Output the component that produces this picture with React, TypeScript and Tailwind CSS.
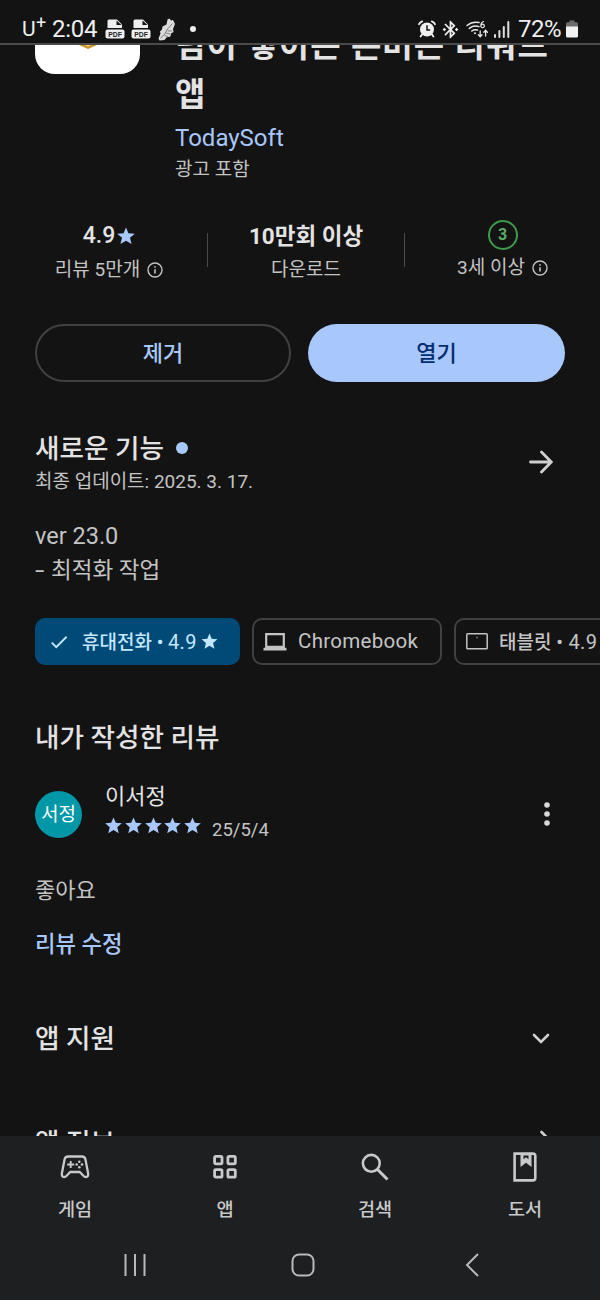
import React from "react";
import { MdBluetoothConnected, MdCheck, MdStar } from "react-icons/md";

const navItems = [
  { name: "게임", icon: <GameIcon /> },
  { name: "앱", icon: <AppsIcon /> },
  { name: "검색", icon: <SearchIcon /> },
  { name: "도서", icon: <BookIcon /> },
];

function Star({ className }: { className: string }) {
  return (
    <svg viewBox="0 0 20 20" className={className} fill="currentColor">
      <path d="M10 .5l2.700 6.400 7.100.5-5.400 4.600 1.800 7L10 15.200l-6.200 3.800 1.800-7L.200 7.400l7.100-.5z" />
    </svg>
  );
}

function InfoIcon() {
  return (
    <svg width="16" height="16" viewBox="0 0 16 16" fill="none" stroke="#c4c4c4" strokeWidth="1.4" className="-mt-px">
      <circle cx="8" cy="8" r="7" />
      <path d="M8 7.2v4.3M8 4.2v1.5" strokeWidth="1.6" />
    </svg>
  );
}

function PdfIcon() {
  return (
    <svg width="20" height="20" viewBox="0 0 20 20">
      <path d="M2.500 9V2q0-1.500 1.500-1.500H12L17 5.500V9z" fill="#eee" />
      <path d="M11.500 1.500v4.500H16.500z" fill="#131313" />
      <rect x="0.5" y="10.5" width="19" height="9" rx="2" fill="#eee" />
      <text x="10" y="17.500" textAnchor="middle" fontSize="6.800" fontWeight="bold" fontFamily="Liberation Sans" fill="#222">PDF</text>
    </svg>
  );
}

function ShoeIcon() {
  return (
    <svg width="18" height="23" viewBox="0 0 18 23">
      <path d="M9.500 1.500l2-1 1.500 2 2-.5 2 4-2 5 .5 3-2.500 1.500-.5 3-4 1-2 2.500-5 .5-1-2 2-5-.5-2 2-2 .5-3 4-2z" fill="#dcdcdc" />
      <path d="M14.500 5.500l-5 5.500-3 5.500-4 3.500M9.800 12.800l4.200.2M8.300 15.200l4 .8M6.700 17.700l3.300.8" fill="none" stroke="#555" strokeWidth="0.700" />
    </svg>
  );
}

function AlarmIcon() {
  return (
    <svg width="18" height="18" viewBox="0 0 18 18">
      <circle cx="9" cy="9.5" r="7" fill="#f0f0f0" />
      <path d="M1 4.2Q2 2 4.2 1.3M17 4.2Q16 2 13.8 1.3M4 14.5L2.6 16.6M14 14.5l1.4 2.1" stroke="#f0f0f0" strokeWidth="1.8" strokeLinecap="round" fill="none" />
      <path d="M9 5.3v4.6h3.2" stroke="#131313" strokeWidth="1.5" fill="none" />
    </svg>
  );
}

function WifiIcon() {
  return (
    <svg width="23" height="18" viewBox="0 0 23 18" fill="none" stroke="#e8e8e8" strokeWidth="1.5" strokeLinecap="round">
      <path d="M1 5.5Q6.5 1 13 2.6M3.3 8.4Q7.5 5 13 6.6M5.8 11Q8.5 9 11.5 10" />
      <circle cx="9" cy="13.2" r="1" fill="#e8e8e8" stroke="none" />
      <path d="M17.5 1.5Q14.8 2.5 14.8 5.8M16.6 4.2a1.7 1.7 0 1 1 0 3.5a1.7 1.7 0 1 1 0-3.5" strokeWidth="1.2" />
      <path d="M14.2 11v5.5M12.4 14.8l1.8 1.9 1.8-1.9M19.6 16v-5.5M17.8 12.2l1.8-1.9 1.8 1.9" strokeWidth="1.3" />
    </svg>
  );
}

function SignalIcon() {
  return (
    <svg width="16" height="17" viewBox="0 0 16 17" fill="#dedede">
      <rect x="0" y="13" width="2" height="4" rx="1" />
      <rect x="4.4" y="9" width="2" height="8" rx="1" />
      <rect x="8.8" y="5" width="2" height="12" rx="1" />
      <rect x="13.3" y="0" width="2" height="17" rx="1" />
    </svg>
  );
}

function BatteryIcon() {
  return (
    <svg width="12" height="18" viewBox="0 0 12 18">
      <path d="M3.5 0.5h5v1.8h2q1.5 0 1.5 1.5V7H0V3.800Q0 2.300 1.500 2.300h2z" fill="#6c6c6c" />
      <path d="M0 6.500h12v9.500q0 1.500-1.500 1.500h-9Q0 17.500 0 16z" fill="#f2f2f2" />
    </svg>
  );
}

function GameIcon() {
  return (
    <svg width="30" height="24" viewBox="0 0 30 24" fill="none" stroke="#c8c9ca" strokeWidth="2.300" strokeLinejoin="round">
      <path d="M8 1.500h14q2.800 0 3.400 2.800l2.700 14q.6 3.700-2.300 3.700-1.200 0-2.200-1l-3.800-4h-9.600l-3.800 4q-1 1-2.200 1-2.900 0-2.300-3.700l2.700-14q.6-2.800 3.400-2.800z" />
      <path d="M10.700 6v7M7.200 9.500h7" strokeWidth="1.900" />
      <g fill="#c8c9ca" stroke="none">
        <circle cx="19.300" cy="6.800" r="1.300" />
        <circle cx="19.300" cy="12.200" r="1.300" />
        <circle cx="16.700" cy="9.500" r="1.300" />
        <circle cx="22" cy="9.500" r="1.300" />
      </g>
    </svg>
  );
}

function AppsIcon() {
  return (
    <svg width="24" height="24" viewBox="0 0 24 24" fill="none" stroke="#c8c9ca" strokeWidth="2.800">
      <rect x="1.600" y="1.400" width="7.400" height="7.400" rx="1.200" />
      <rect x="14.900" y="1.400" width="7.400" height="7.400" rx="1.200" />
      <rect x="1.600" y="14.700" width="7.400" height="7.400" rx="1.200" />
      <rect x="14.900" y="14.700" width="7.400" height="7.400" rx="1.200" />
    </svg>
  );
}

function SearchIcon() {
  return (
    <svg width="28" height="28" viewBox="0 0 28 28" fill="none" stroke="#c8c9ca" strokeWidth="2.600">
      <circle cx="10.300" cy="10.300" r="8.400" />
      <path d="M16.300 16.300L26.500 26.500" strokeWidth="3" />
    </svg>
  );
}

function BookIcon() {
  return (
    <svg width="24" height="30" viewBox="0 0 24 30" fill="none" stroke="#c8c9ca" strokeWidth="2.600">
      <path d="M1.600 1.600h18.300q2.400 0 2.400 2.400v22q0 2.400-2.400 2.400H1.600z" />
      <path d="M7.500 1.500h11V15l-5.500-4.300L7.500 15z M10.500 3.500v3.700l2.500-2 2.500 2V3.500z" fill="#c8c9ca" fillRule="evenodd" stroke="none" />
    </svg>
  );
}

const App = () => {
  return (
    <div className="w-[600px] h-[1300px] flex flex-col overflow-hidden bg-[#131313] text-[#e3e3e3] font-[Roboto,'Noto_Sans_CJK_KR',sans-serif] whitespace-nowrap">
      {/* Status bar */}
      <header className="h-[45px] shrink-0 border-b-2 border-[#4a4a4a] flex items-center pt-[15px] text-[#efefef]">
        <div className="flex items-center w-[418px] pl-[22px]">
          <span className="text-[21px] leading-6 w-[13px]">U</span>
          <span className="text-[18px] leading-6 w-[17px] -mt-3 pl-px">+</span>
          <span className="text-[24px] leading-6 w-[53px] tracking-[-0.3px]">2:04</span>
          <PdfIcon />
          <span className="w-[6px]"></span>
          <PdfIcon />
          <span className="w-[7px]"></span>
          <ShoeIcon />
          <span className="ml-[14px] w-[6px] h-[6px] rounded-full bg-[#eee]"></span>
        </div>
        <AlarmIcon />
        <MdBluetoothConnected className="w-[21px] h-[21px] ml-[4px] mr-[5px]" />
        <WifiIcon />
        <span className="ml-[5px] mr-2"><SignalIcon /></span>
        <span className="text-[24px] leading-6 w-[48px] tracking-[-0.500px]">72%</span>
        <BatteryIcon />
      </header>

      <main className="h-[1091px] shrink-0 overflow-hidden">
        {/* App header */}
        <section className="flex h-[137px] pl-[35px]">
          <div className="w-[105px] h-[29px] bg-white rounded-b-[20px] flex justify-center">
            <svg width="20" height="4" viewBox="0 0 20 4">
              <path d="M1 0h18l-9 4z" fill="#c99526" />
              <path d="M7 0h6l-3 2z" fill="#f2cc6c" />
            </svg>
          </div>
          <div className="ml-[35px] -mt-[24px]">
            <h1 className="text-[33px] leading-[49px] tracking-[1.100px] font-bold">
              덤이 쌓이는 돈버는 리워드
              <br />앱
            </h1>
            <p className="text-[24px] leading-8 mt-[3px] text-[#a8c7fa]">TodaySoft</p>
            <p className="text-[19px] leading-7 mt-[2px] text-[#c4c4c4]">광고 포함</p>
          </div>
        </section>

        {/* Stats */}
        <section className="flex items-start h-[142px] pt-[38px]">
          <div className="w-[207px] pl-[11px] flex flex-col items-center gap-[2px]">
            <div className="flex items-center h-8 text-[23px] font-medium">
              4.9<Star className="w-[18px] h-[18px] ml-[2px] text-[#a8c7fa]" />
            </div>
            <div className="flex items-center gap-[7px] h-8 text-[19px] text-[#c4c4c4]">
              리뷰 5만개 <InfoIcon />
            </div>
          </div>
          <div className="w-px h-[34px] mt-[13px] bg-[#4b4b4b]"></div>
          <div className="w-[196px] flex flex-col items-center gap-[2px]">
            <div className="h-8 leading-8 text-[22.500px] font-bold">10만회 이상</div>
            <div className="h-8 leading-8 text-[19px] text-[#c4c4c4]">다운로드</div>
          </div>
          <div className="w-px h-[34px] mt-[13px] bg-[#4b4b4b]"></div>
          <div className="w-[195px] flex flex-col items-center gap-[2px]">
            <div className="w-[30px] h-[30px] rounded-full border-2 border-[#3e9b4c] text-[#58ae63] text-[16px] font-bold flex items-center justify-center">3</div>
            <div className="flex items-center gap-[7px] h-8 text-[19px] text-[#c4c4c4]">
              3세 이상 <InfoIcon />
            </div>
          </div>
        </section>

        {/* Actions */}
        <section className="flex gap-[17px] px-[35px] h-[58px] text-[22px] font-medium">
          <button className="w-[256px] rounded-full border-2 border-[#3f4142] text-[#a8c7fa]">제거</button>
          <button className="w-[257px] rounded-full bg-[#a8c7fa] text-[#062e6f]">열기</button>
        </section>

        {/* What's new */}
        <section className="pl-[35px] pt-[49px] h-[236px]">
          <div className="flex justify-between pr-[47px]">
            <div>
              <h2 className="flex items-center gap-3 text-[26.600px] leading-9 h-9 font-medium">
                새로운 기능 <span className="w-3 h-3 -mt-[3px] rounded-full bg-[#a8c7fa]"></span>
              </h2>
              <p className="text-[19px] leading-[30px] text-[#c4c4c4]">최종 업데이트: 2025. 3. 17.</p>
            </div>
            <svg width="24" height="24" viewBox="0 0 24 24" className="mt-[19px]" fill="none" stroke="#d0d0d0" strokeWidth="2.800" strokeLinecap="round">
              <path d="M1.500 12H22M12.500 2L22.300 12l-9.800 10" />
            </svg>
          </div>
          <div className="mt-[22px] text-[22.500px] leading-[34px] text-[#c4c4c4]">
            <p className="text-[23.500px]">ver 23.0</p>
            <p className="flex"><span className="w-4"><span className="inline-block origin-left scale-x-150">-</span></span>최적화 작업</p>
          </div>
        </section>

        {/* Device filters */}
        <section className="flex gap-3 pl-[35px] h-[47px] overflow-hidden text-[19px] text-[#c4c4c4]">
          <div className="w-[205px] shrink-0 rounded-[10px] bg-[#004a77] text-[#c2e7ff] flex items-center pl-[13px] font-medium">
            <MdCheck className="w-[22px] h-[22px] mr-[12px]" />
            <span className="pt-[2px]">휴대전화 • <span className="font-normal text-[20px] tracking-[0.300px]">4.9</span></span>
            <MdStar className="w-[19px] h-[19px] ml-[3px]" />
          </div>
          <div className="w-[190px] shrink-0 rounded-[10px] border-2 border-[#3f4142] flex items-center pl-[9px]">
            <svg width="24" height="18" viewBox="0 0 24 18">
              <path d="M3.200 1.200h17.600v12.600H3.200z" fill="none" stroke="#c4c4c4" strokeWidth="2.200" />
              <path d="M0.500 14.800h23v2.700H0.500z" fill="#c4c4c4" />
            </svg>
            <span className="ml-[11px] text-[20.500px] tracking-[0.300px]">Chromebook</span>
          </div>
          <div className="w-[205px] shrink-0 rounded-[10px] border-2 border-[#3f4142] flex items-center pl-[10px] font-medium">
            <svg width="22" height="17" viewBox="0 0 22 17" fill="none" stroke="#c4c4c4" strokeWidth="1.500">
              <rect x="0.800" y="0.800" width="20.400" height="15" rx="0.800" />
              <path d="M10.500 4.500h1" />
            </svg>
            <span className="ml-[11px] pt-[2px]">태블릿 • <span className="ml-px font-normal text-[20px] tracking-[0.300px]">4.9</span></span>
          </div>
        </section>

        {/* My review */}
        <section className="px-[35px] pt-[53px] h-[321px]">
          <h2 className="text-[26.600px] leading-10 font-medium">내가 작성한 리뷰</h2>
          <div className="flex items-center mt-[21px] h-[66px]">
            <div className="w-[47px] h-[47px] rounded-full bg-[#0097a7] text-white text-[19px] flex items-center justify-center mt-1 pt-[3px]">서정</div>
            <div className="ml-[23px] flex-1">
              <p className="text-[22px] leading-8">이서정</p>
              <div className="flex h-[30px]">
                {[1, 2, 3, 4, 5].map((n) => (
                  <Star key={n} className="w-[17px] h-[17px] mr-[2.800px] mt-[4px] text-[#a8c7fa]" />
                ))}
                <span className="ml-[8px] mt-[3px] text-[18.500px] leading-[28px] text-[#c4c4c4]">25/5/4</span>
              </div>
            </div>
            <svg width="6" height="24" viewBox="0 0 6 24" fill="#d8d8d8" className="mr-[15px] mt-1">
              <circle cx="3" cy="3" r="2.800" />
              <circle cx="3" cy="12" r="2.800" />
              <circle cx="3" cy="21" r="2.800" />
            </svg>
          </div>
          <p className="mt-[28px] text-[22px] leading-9 text-[#c4c4c4]">좋아요</p>
          <p className="mt-[17px] text-[22.300px] leading-9 font-medium text-[#a8c7fa]">리뷰 수정</p>
        </section>

        {/* Collapsed rows */}
        <section className="px-[35px]">
          {["앱 지원", "앱 정보"].map((row, index) => (
            <div key={index} className="flex items-center justify-between h-[104px] pr-[15px]">
              <h2 className="text-[26.600px] leading-10 pt-px font-medium">{row}</h2>
              {index === 0 ? (
                <svg width="18" height="11" viewBox="0 0 18 11" fill="none" stroke="#d0d0d0" strokeWidth="2.600" strokeLinecap="round">
                  <path d="M2 2l7 7 7-7" />
                </svg>
              ) : (
                <svg width="24" height="24" viewBox="0 0 24 24" fill="none" stroke="#d0d0d0" strokeWidth="2.600" strokeLinecap="round">
                  <path d="M15.500 2L24 10.500" />
                </svg>
              )}
            </div>
          ))}
        </section>
      </main>

      {/* Bottom navigation */}
      <footer className="h-[164px] shrink-0 bg-[#1e1f20] text-[#c8c9ca]">
        <nav className="grid grid-cols-4 h-[94px] pt-[15px]">
          {navItems.map((item) => (
            <div key={item.name} className="flex flex-col items-center">
              <div className="h-8 flex items-center">{item.icon}</div>
              <span className="mt-[13px] text-[18.600px] leading-7 font-medium">{item.name}</span>
            </div>
          ))}
        </nav>
        <div className="flex items-center justify-between h-[70px] pl-[123px] pr-[121px]">
          <svg width="24" height="24" viewBox="0 0 24 24" stroke="#b9b9ba" strokeWidth="2">
            <path d="M2.500 1v22M12 1v22M21.500 1v22" />
          </svg>
          <svg width="24" height="24" viewBox="0 0 24 24" fill="none" stroke="#b9b9ba" strokeWidth="2" className="mr-[6px]">
            <rect x="1.500" y="1.500" width="21" height="21" rx="6.500" />
          </svg>
          <svg width="14" height="24" viewBox="0 0 14 24" fill="none" stroke="#b9b9ba" strokeWidth="2">
            <path d="M13 1L2 12l11 11" />
          </svg>
        </div>
      </footer>
    </div>
  );
};

export default App;
